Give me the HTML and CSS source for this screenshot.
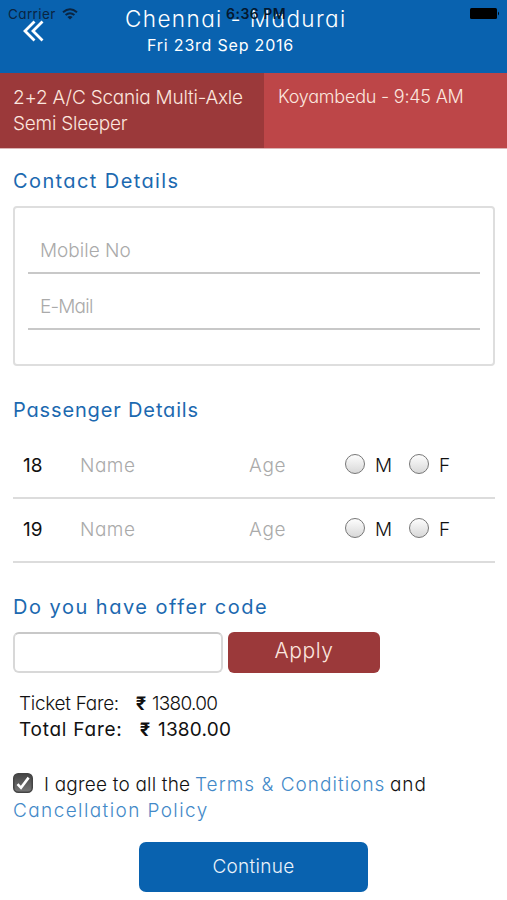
FILE: index.html
```html
<!DOCTYPE html>
<html lang="en">
<head>
  <meta charset="UTF-8">
  <meta name="viewport" content="width=device-width, initial-scale=1.0">
  <title>Passenger Details</title>
  <link rel="stylesheet" href="styles.css">
</head>
<body>

  <div class="status-bar">
    <span class="carrier">Carrier</span>
    <svg class="wifi" width="16" height="12" viewBox="0 0 16 12" fill="none" stroke="#0a2542" stroke-width="2">
      <path d="M1 4.2Q8-1.6 15 4.2"/>
      <path d="M3.6 7Q8 3.4 12.4 7"/>
      <path d="M8 11.6L5.4 9Q8 7 10.6 9Z" fill="#0a2542" stroke="none"/>
    </svg>
    <span class="clock">6:36 PM</span>
    <svg class="battery" width="30" height="12" viewBox="0 0 30 12">
      <rect x="0" y="0" width="27" height="11" rx="1.5"/>
      <path d="M28 3.5Q30 5.5 28 7.5Z"/>
    </svg>
  </div>

  <header class="header">
    <svg class="back" width="22" height="22" viewBox="0 0 22 22" fill="none" stroke="#fff" stroke-width="2.8">
      <path d="M11.5 1.5L2 11L11.5 20.5"/>
      <path d="M19.5 1.5L10 11L19.5 20.5"/>
    </svg>
    <h1 class="route">Chennai - Madurai</h1>
    <div class="date">Fri 23rd Sep 2016</div>
  </header>

  <div class="trip">
    <div class="bus">2+2 A/C Scania Multi-Axle<br>Semi Sleeper</div>
    <div class="boarding">Koyambedu - 9:45 AM</div>
  </div>

  <form class="booking">
    <h2 class="title contact-title">Contact Details</h2>
    <div class="panel">
      <input class="field mobile" type="text" placeholder="Mobile No">
      <input class="field email" type="text" placeholder="E-Mail">
    </div>

    <h2 class="title passenger-title">Passenger Details</h2>
    <div class="passenger">
      <span class="seat">18</span>
      <input class="name" type="text" placeholder="Name">
      <input class="age" type="text" placeholder="Age">
      <input class="radio" type="radio" name="gender18"><label class="gender">M</label>
      <input class="radio" type="radio" name="gender18"><label class="gender">F</label>
    </div>
    <div class="passenger">
      <span class="seat">19</span>
      <input class="name" type="text" placeholder="Name">
      <input class="age" type="text" placeholder="Age">
      <input class="radio" type="radio" name="gender19"><label class="gender">M</label>
      <input class="radio" type="radio" name="gender19"><label class="gender">F</label>
    </div>

    <h2 class="title offer-title">Do you have offer code</h2>
    <div class="offer">
      <input class="code" type="text">
      <button class="apply" type="button">Apply</button>
    </div>

    <div class="fare">
      <span class="fare-label">Ticket Fare:</span>
      <span class="rupee">₹</span>
      <span class="amount">1380.00</span>
    </div>
    <div class="fare total">
      <span class="fare-label">Total Fare:</span>
      <span class="rupee">₹</span>
      <span class="amount">1380.00</span>
    </div>

    <div class="terms">
      <svg class="check" width="20" height="20" viewBox="0 0 20 20">
        <defs>
          <linearGradient id="check-bg" x1="0" y1="0" x2="0" y2="1">
            <stop offset="0" stop-color="#444"/>
            <stop offset="1" stop-color="#777"/>
          </linearGradient>
        </defs>
        <rect x="0.75" y="0.75" width="18.5" height="18.5" rx="4.5" fill="url(#check-bg)" stroke="#444" stroke-width="1.5"/>
        <path d="M4.5 11.2L8 14.8L15.6 4.6" fill="none" stroke="#fff" stroke-width="2.6"/>
      </svg>
      <span class="agree">I agree to all the</span>
      <a class="link terms-link">Terms &amp; Conditions</a>
      <span class="and">and</span>
    </div>
    <div class="policy"><a class="link policy-link">Cancellation Policy</a></div>

    <button class="continue" type="button">Continue</button>
  </form>

</body>
</html>
```

FILE: styles.css
```css
* {
  box-sizing: border-box;
}

body {
  font-family: 'Inter', 'Lato', sans-serif;
  font-feature-settings: 'cv11';
  font-weight: 300;
  font-size: 19px;
  background-color: #fff;
  color: #111;
  margin: 0;
  height: 900px;
  overflow: hidden;
}

input,
button {
  font: inherit;
  font-feature-settings: inherit;
  border: none;
  padding: 0;
  min-width: 0;
  background: none;
}

input::placeholder {
  color: #aaa;
  opacity: 1;
}

/* status bar sits over the header */
.status-bar {
  position: absolute;
  top: 0;
  left: 0;
  width: 507px;
  height: 27px;
  padding: 0 7px 0 8px;
  display: flex;
  align-items: center;
  font-size: 13.5px;
  font-weight: 400;
  color: #0a2542;
  z-index: 2;
}

.carrier {
  letter-spacing: 0.4px;
}

.wifi {
  margin-left: 6px;
}

.clock {
  position: absolute;
  left: 226px;
  font-weight: 600;
  font-size: 14px;
  letter-spacing: 0.5px;
  color: #04182e;
}

.battery {
  margin-left: auto;
}

.header {
  position: relative;
  height: 73px;
  padding-top: 5px;
  background-color: #0962af;
  color: #fff;
}

.back {
  position: absolute;
  left: 23px;
  top: 20px;
}

.route {
  margin: 0 0 0 125px;
  font-size: 22.5px;
  font-weight: 300;
  line-height: 28px;
  letter-spacing: 1.4px;
  white-space: nowrap;
}

.date {
  margin-left: 147px;
  font-size: 16px;
  font-weight: 400;
  line-height: 24px;
  letter-spacing: 0.8px;
}

.trip {
  display: flex;
  height: 76px;
  border-bottom: 1px solid #dcb4b4;
  color: #fbe6df;
  line-height: 26px;
  letter-spacing: -0.22px;
  white-space: nowrap;
}

.bus {
  width: 264px;
  padding: 12px 0 0 13px;
  background-color: #9b393a;
}

.boarding {
  flex: 1;
  padding: 11px 0 0 14px;
  font-size: 18px;
  background-color: #bd4648;
}

.booking {
  padding: 0 12px 0 13px;
}

.title {
  margin: 0;
  font-size: 20px;
  font-weight: 400;
  line-height: 26px;
  color: #1c69b0;
}

.contact-title {
  padding-top: 19px;
  letter-spacing: 1.4px;
}

.panel {
  margin-top: 12px;
  height: 160px;
  padding: 22px 13px 0;
  border: 2px solid #dedede;
  border-radius: 4px;
}

.field {
  display: block;
  width: 100%;
  height: 44px;
  padding: 0 0 2px 12px;
  border-bottom: 2px solid #c8c8c8;
}

.email {
  margin-top: 12px;
  letter-spacing: -0.8px;
}

.passenger-title {
  margin-top: 31px;
  letter-spacing: 0.85px;
}

.passenger {
  display: flex;
  align-items: center;
  height: 64px;
  padding: 0 0 2px 10px;
  border-bottom: 2px solid #dcdcdc;
}

.passenger-title + .passenger {
  margin-top: 12px;
}

.seat {
  width: 57px;
  font-weight: 400;
}

.name {
  width: 169px;
  letter-spacing: 0.5px;
}

.age {
  width: 96px;
  letter-spacing: 0.7px;
}

.radio {
  appearance: none;
  width: 20px;
  height: 20px;
  margin: 0 10px 3px 0;
  border: 1.5px solid #777;
  border-radius: 50%;
  background: linear-gradient(#fdfdfd, #d8d8d8);
}

.gender {
  width: 34px;
}

.offer-title {
  margin-top: 31px;
  letter-spacing: 1.5px;
}

.offer {
  display: flex;
  gap: 5px;
  margin-top: 12px;
}

.code {
  width: 210px;
  height: 41px;
  border: 2px solid #d8d8d8;
  border-top-color: #c8c8c8;
  border-radius: 6px;
}

.apply {
  width: 152px;
  height: 41px;
  padding-bottom: 4px;
  border-radius: 6px;
  background-color: #9b393a;
  color: #fbe6df;
  font-size: 21px;
  letter-spacing: 0.6px;
}

.fare {
  display: flex;
  margin-left: 6px;
  line-height: 26px;
  letter-spacing: -0.3px;
}

.offer + .fare {
  margin-top: 18px;
}

.fare-label {
  width: 117px;
}

.rupee {
  width: 16px;
  font-family: 'Roboto', sans-serif;
  font-weight: 700;
}

.amount {
  letter-spacing: -0.7px;
}

.total {
  font-weight: 400;
}

.total .fare-label {
  width: 121px;
  letter-spacing: 0.75px;
}

.total .rupee {
  width: 18px;
}

.total .amount {
  letter-spacing: 0.2px;
}

.terms {
  display: flex;
  margin-top: 29px;
  line-height: 26px;
  white-space: nowrap;
}

.check {
  margin-top: 1px;
}

.agree {
  width: 151px;
  margin-left: 11px;
  letter-spacing: 0.2px;
}

.link {
  color: #4389c8;
}

.terms-link {
  width: 195px;
  letter-spacing: 1.02px;
}

.and {
  letter-spacing: 0.9px;
}

.policy {
  line-height: 26px;
}

.policy-link {
  letter-spacing: 1.4px;
}

.continue {
  display: block;
  width: 229px;
  height: 50px;
  margin: 18px 0 0 126px;
  padding-bottom: 2px;
  border-radius: 7px;
  background-color: #0962af;
  color: #e9f2fa;
  letter-spacing: 0.3px;
}
```
